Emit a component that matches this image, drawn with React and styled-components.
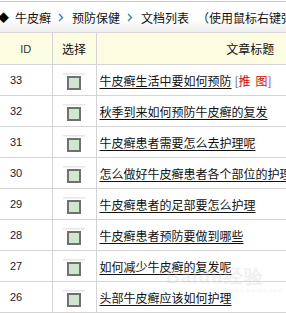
import React from "react";
import styled, { createGlobalStyle } from "styled-components";

const Global = createGlobalStyle`
html, body {
  margin: 0;
  padding: 0;
  background: #fff;
  overflow: hidden;
}
body {
  font-family: "Noto Sans CJK SC", "Liberation Sans", sans-serif;
  font-size: 12px;
  color: #000;
}
`

const Page = styled.div`
position: relative;
width: 420px;
`

const Crumbs = styled.div`
height: 30px;
border-top: 1px solid #c8c8c8;
border-bottom: 1px solid #d8d8d8;
margin-top: 1px;
background: linear-gradient(#ffffff 0%, #ffffff 55%, #eeeeee 100%);
display: flex;
align-items: center;
white-space: nowrap;
font-size: 12px;
`

const Diamond = styled.span`
font-size: 11px;
margin-left: -2px;
margin-right: 6px;
`

const Crumb = styled.span`
color: #111;
`

const Sep = styled.span`
display: inline-flex;
margin: 0 8px 0 7px;
`

const Hint = styled.span`
margin-left: 8px;
color: #111;
`

const Table = styled.table`
border-collapse: collapse;
table-layout: fixed;
width: 404px;
`

const HeadCell = styled.th`
height: 31px;
padding: 0;
background: #fcfce3;
font-weight: normal;
font-size: 12px;
text-align: center;
border-right: 1px solid #d4d4d4;
border-bottom: 1px solid #d4d4d4;
color: #111;
&:last-child { border-right: none; }
`

const IdHead = styled(HeadCell)`
font-family: "Liberation Sans", sans-serif;
font-size: 11px;
color: #333;
`

const Cell = styled.td`
height: 30px;
padding: 0;
border-right: 1px solid #d4d4d4;
border-bottom: 1px solid #d4d4d4;
&:last-child { border-right: none; }
`

const IdCell = styled(Cell)`
padding-left: 10px;
font-family: "Liberation Sans", sans-serif;
font-size: 11px;
color: #223;
`

const PickCell = styled(Cell)`
text-align: center;
`

const Box = styled.span`
position: relative;
display: inline-block;
vertical-align: middle;
width: 10px;
height: 10px;
margin-top: 3px;
margin-left: -1px;
background: #cfe7cf;
border: 2px solid #707070;
&::before {
  content: "";
  position: absolute;
  left: -6px;
  right: -6px;
  top: -5px;
  height: 2px;
  background: linear-gradient(#e2e2e2, #f6f6f6);
}
`

const TitleCell = styled(Cell)`
padding-left: 3px;
white-space: nowrap;
`

const Link = styled.a`
color: #111;
text-decoration: underline;
text-underline-offset: 2px;
`

const Tag = styled.span`
margin-left: 3px;
color: #e00000;
`

const Gap = styled.span`
display: inline-block;
width: 5px;
`

const Bracket = styled.span`
color: #667;
`

const Mark = styled.div`
position: absolute;
left: 166px;
top: 266px;
color: rgba(205, 205, 205, 0.3);
font-family: "Liberation Sans", sans-serif;
font-weight: bold;
font-size: 19px;
letter-spacing: 1px;
pointer-events: none;
line-height: 1;
small {
  display: block;
  font-size: 6px;
  letter-spacing: 1px;
  margin-left: 52px;
  margin-top: 1px;
  font-weight: normal;
}
`

function Arrow() {
  return (
    <Sep>
      <svg width="6" height="9" viewBox="0 0 6 9">
        <path d="M1 1 L4.5 4.5 L1 8" fill="none" stroke="#3f7fc8" strokeWidth="1.4" />
      </svg>
    </Sep>
  );
}

const rows = [
  { id: 33, title: "牛皮癣生活中要如何预防", tag: true },
  { id: 32, title: "秋季到来如何预防牛皮癣的复发" },
  { id: 31, title: "牛皮癣患者需要怎么去护理呢" },
  { id: 30, title: "怎么做好牛皮癣患者各个部位的护理" },
  { id: 29, title: "牛皮癣患者的足部要怎么护理" },
  { id: 28, title: "牛皮癣患者预防要做到哪些" },
  { id: 27, title: "如何减少牛皮癣的复发呢" },
  { id: 26, title: "头部牛皮癣应该如何护理" },
];

export default function App() {
  return (
    <Page>
      <Global />
      <Crumbs>
        <Diamond>◆</Diamond>
        <Crumb>牛皮癣</Crumb>
        <Arrow />
        <Crumb>预防保健</Crumb>
        <Arrow />
        <Crumb>文档列表</Crumb>
        <Hint>（使用鼠标右键弹出菜单）</Hint>
      </Crumbs>
      <Table>
        <colgroup>
          <col style={{ width: 52 }} />
          <col style={{ width: 44 }} />
          <col />
        </colgroup>
        <thead>
          <tr>
            <IdHead>ID</IdHead>
            <HeadCell>选择</HeadCell>
            <HeadCell>文章标题</HeadCell>
          </tr>
        </thead>
        <tbody>
          {rows.map((r) => (
            <tr key={r.id}>
              <IdCell>{r.id}</IdCell>
              <PickCell><Box /></PickCell>
              <TitleCell>
                <Link>{r.title}</Link>
                {r.tag && (
                  <Tag><Bracket>[</Bracket>推<Gap />图<Bracket>]</Bracket></Tag>
                )}
              </TitleCell>
            </tr>
          ))}
        </tbody>
      </Table>
      <Mark>Baidu经验<small>jingyan.baidu.com</small></Mark>
    </Page>
  );
}
